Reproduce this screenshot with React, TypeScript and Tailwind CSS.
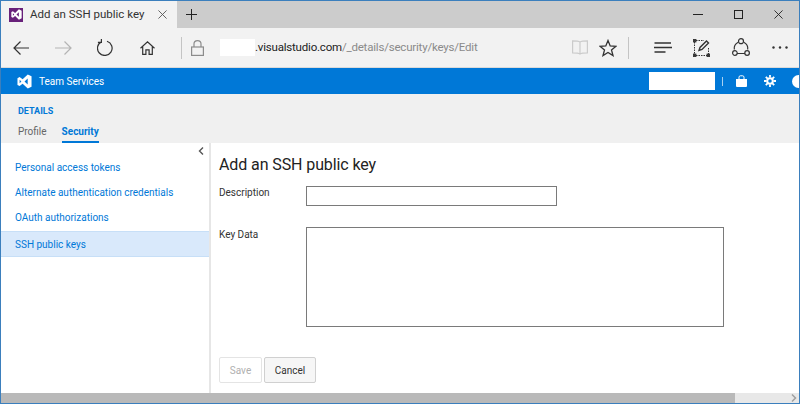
import React from "react";

// ── Logos and browser glyphs, drawn to the size they have in the picture ───────

function VsLogo({ size, color }: { size: number; color: string }) {
    return (
        <svg width={size} height={size} viewBox="0 0 16 16" fill={color}>
            <path d="M11.5 0.5 15.5 2.4v11.2L11.5 15.5 6 10.3l-3.2 2.5L0.5 11.6V4.4L2.8 3.2 6 5.7zM2.8 6.2v3.6L4.7 8zM11.4 4.8 8 8l3.4 3.2z" />
        </svg>
    );
}

const Back = () => (
    <svg width="16" height="14" viewBox="0 0 16 14" fill="none" stroke="#333" strokeWidth="1.2"><path d="M16 7H1M7.5.5 1 7l6.5 6.5" /></svg>
);
const Forward = () => (
    <svg width="17" height="14" viewBox="0 0 17 14" fill="none" stroke="#b4b4b4" strokeWidth="1.2"><path d="M0 7h16M9.5.5 16 7l-6.5 6.5" /></svg>
);
const Reload = () => (
    <svg width="16" height="17" viewBox="0 0 16 17" fill="none" stroke="#333" strokeWidth="1.2"><path d="M10 2.2A7.3 7.3 0 1 1 4.6 2.6M4.4 0v3.4H0.9" /></svg>
);
const HomeIcon = () => (
    <svg width="15" height="14" viewBox="0 0 15 14" fill="none" stroke="#333" strokeWidth="1.2"><path d="M.5 7.2 7.5 .9l7 6.3M2.7 5.6v7.8h3.2V8.8h3.2v4.6h3.2V5.6" /></svg>
);
const LockIcon = () => (
    <svg width="13" height="16" viewBox="0 0 13 16" fill="none" stroke="#8c8c8c" strokeWidth="1.2"><rect x=".6" y="7" width="11.8" height="8.4" /><path d="M3 7V3.8a3.5 3.2 0 0 1 7 0V7" /></svg>
);
const Reader = () => (
    <svg width="16" height="15" viewBox="0 0 16 15" fill="none" stroke="#cbcbcb" strokeWidth="1.2"><path d="M8 2C6.5 1 3 .8.6.8v12c2.4 0 5.9.2 7.4 1.2 1.500-1 5-1.200 7.400-1.200V.8C13 .8 9.500 1 8 2zM8 2v12" /></svg>
);
const StarIcon = () => (
    <svg width="18" height="18" viewBox="0 0 18 18" fill="none" stroke="#333" strokeWidth="1.3"><path d="M9 1.500 11.200 6.900l5.800.4-4.500 3.700 1.500 5.600L9 13.500l-5 3.100 1.500-5.600L1 7.300l5.800-.4z" /></svg>
);
const HubIcon = () => (
    <svg width="18" height="11" viewBox="0 0 18 11" fill="none" stroke="#333" strokeWidth="1.300"><path d="M.5 1h16.500M0 5.500h18M.5 10h11" /></svg>
);
const NoteIcon = () => (
    <svg width="17" height="18" viewBox="0 0 17 18" fill="none" stroke="#333" strokeWidth="1">
        <path d="M1.500 3v12.500M3 16.500h11M15.500 9v6M3 1.500h8" strokeDasharray="1.500 1" />
        <path d="M6 11.500l1-3 6.500-6.500 2 2L9 10.500z" strokeWidth="1.400" />
        <rect x=".3" y=".3" width="2.600" height="2.600" fill="#333" />
        <rect x=".3" y="15.100" width="2.600" height="2.600" fill="#333" />
        <rect x="14.100" y="15.100" width="2.600" height="2.600" fill="#333" />
    </svg>
);
const ShareIcon = () => (
    <svg width="18" height="19" viewBox="0 0 18 19" fill="none" stroke="#333" strokeWidth="1.200">
        <path d="M6.200 4.300A7 7 0 0 0 2.300 11.500M11.800 4.300A7 7 0 0 1 15.700 11.500M5 15.500h8" />
        <circle cx="9" cy="3.200" r="2.500" />
        <circle cx="2.900" cy="15" r="2.300" />
        <circle cx="15.100" cy="15" r="2.300" />
    </svg>
);
const Dots = () => (
    <svg width="16" height="3" viewBox="0 0 16 3" fill="#333"><circle cx="1.500" cy="1.500" r="1.200" /><circle cx="8" cy="1.500" r="1.200" /><circle cx="14.500" cy="1.500" r="1.200" /></svg>
);
const Cross = ({ size, color }: { size: number; color: string }) => (
    <svg width={size} height={size} viewBox="0 0 10 10" fill="none" stroke={color} strokeWidth="1"><path d="M.5.5l9 9M9.500.5l-9 9" /></svg>
);
const Bag = () => (
    <svg width="11" height="12" viewBox="0 0 11 12" fill="#fff"><path d="M0 4h11v7a1 1 0 0 1-1 1H1a1 1 0 0 1-1-1z" /><path d="M3 4.500V2.200C3 1.300 3.600.8 4.300.8h2.400C7.400.8 8 1.300 8 2.200v2.300" fill="none" stroke="#fff" /></svg>
);
const Gear = () => (
    <svg width="12" height="12" viewBox="0 0 12 12" fill="none" stroke="#fff"><circle cx="6" cy="6" r="2.800" strokeWidth="2" /><path d="M6 0v2.500M6 9.500V12M0 6h2.500M9.500 6H12M1.800 1.800l1.800 1.800M8.400 8.400l1.800 1.800M1.800 10.200l1.800-1.800M8.400 3.600l1.800-1.800" strokeWidth="1.800" /></svg>
);

// ── Main export ────────────────────────────────────────────────────────────────

const links = ["Personal access tokens", "Alternate authentication credentials", "OAuth authorizations"];

export default function App() {
    return (
        <div className="w-[800px] h-[404px] overflow-hidden flex flex-col border border-[#3b7fbd] bg-white text-[#333] font-['Roboto','Noto_Sans',sans-serif]">
            {/* ── Tab strip ── */}
            <div className="h-[27px] shrink-0 flex bg-[#cccccc]">
                <div className="w-[176px] bg-[#f2f2f2] flex items-center pl-[8px]">
                    <div className="w-[14px] h-[14px] flex items-center justify-center bg-[#68217a]">
                        <VsLogo size={11} color="#fff" />
                    </div>
                    <span className="w-[128px] ml-[7px] text-[11.5px] whitespace-nowrap">Add an SSH public key</span>
                    <div className="flex"><Cross size={9} color="#555" /></div>
                </div>
                <svg width="11" height="11" viewBox="0 0 11 11" stroke="#222" className="ml-[9px] self-center"><path d="M5.500 0v11M0 5.500h11" /></svg>
                <div className="ml-auto flex items-center pr-[16px] text-[#222]">
                    <div className="w-[10px] h-px bg-[#222]" />
                    <div className="ml-[31px] w-[9px] h-[9px] border border-[#222]" />
                    <div className="ml-[31px] flex"><Cross size={9} color="#222" /></div>
                </div>
            </div>

            {/* ── Address bar ── */}
            <div className="h-[40px] shrink-0 flex items-center bg-[#f2f2f2] border-b border-[#dadada]">
                <div className="ml-[12px] flex"><Back /></div>
                <div className="ml-[26px] flex"><Forward /></div>
                <div className="ml-[25px] flex"><Reload /></div>
                <div className="ml-[27px] flex"><HomeIcon /></div>
                <div className="ml-[26px] w-px h-[22px] bg-[#c4c4c4]" />
                <div className="ml-[9px] flex"><LockIcon /></div>
                <div className="ml-[16px] w-[35px] h-[17px] bg-white" />
                <span className="w-[317px] text-[11.5px] tracking-[-0.2px] whitespace-nowrap text-[#222]">.visualstudio.com<span className="text-[#8a8a8a]">/_details/security/keys/Edit</span></span>
                <div className="flex"><Reader /></div>
                <div className="ml-[11px] flex"><StarIcon /></div>
                <div className="ml-[11px] w-px h-[22px] bg-[#c4c4c4]" />
                <div className="ml-[25px] flex"><HubIcon /></div>
                <div className="ml-[21px] flex"><NoteIcon /></div>
                <div className="ml-[22px] flex"><ShareIcon /></div>
                <div className="ml-[22px] flex"><Dots /></div>
            </div>

            {/* ── Service bar ── */}
            <div className="h-[26px] shrink-0 flex items-center bg-[#0078d7] text-white overflow-hidden">
                <div className="ml-[16px] flex"><VsLogo size={15} color="#fff" /></div>
                <span className="ml-[7px] text-[10px]">Team Services</span>
                <div className="ml-auto w-[66px] h-[18px] bg-white" />
                <div className="ml-[7px] w-px h-[9px] bg-[#a8d0f0]" />
                <div className="ml-[13px] flex"><Bag /></div>
                <div className="ml-[17px] flex"><Gear /></div>
                <div className="ml-[16px] mr-[-6px] w-[13px] h-[13px] rounded-full bg-white shrink-0" />
            </div>

            {/* ── Page header ── */}
            <div className="h-[49px] shrink-0 bg-[#f0f0f0] pl-[17px] flex flex-col">
                <div className="mt-[11px] text-[9px] font-bold leading-[12px] text-[#0078d7]">DETAILS</div>
                <div className="mt-[5px] flex gap-[15px] text-[10px] leading-[20px]">
                    <span className="text-[#666]">Profile</span>
                    <span className="font-bold text-[#0078d7] border-b-2 border-[#0078d7] h-[21px]">Security</span>
                </div>
            </div>

            {/* ── Body ── */}
            <div className="flex-1 min-h-0 flex">
                <div className="w-[210px] shrink-0 border-r-2 border-[#e6e6e6] pt-[12px] relative">
                    <svg width="6" height="8" viewBox="0 0 6 8" fill="none" stroke="#555" strokeWidth="1.400" className="absolute right-[5px] top-[4px]"><path d="M5 .5 1.500 4 5 7.500" /></svg>
                    {links.map((l) => (
                        <div key={l} className="h-[25px] pl-[14px] flex items-center text-[10px] whitespace-nowrap text-[#0078d7]">{l}</div>
                    ))}
                    <div className="mt-[1px] h-[26px] pl-[14px] flex items-center text-[10px] text-[#0078d7] bg-[#d9e9fb] border-y border-[#c7dff7]">SSH public keys</div>
                </div>
                <div className="flex-1 pl-[8px]">
                    <h1 className="mt-[9px] text-[16px] tracking-[-0.1px] leading-[26px] whitespace-nowrap text-[#222]">Add an SSH public key</h1>
                    <div className="mt-[8px] flex items-start">
                        <label className="w-[87px] text-[10px] leading-[16px] -mt-[1px]">Description</label>
                        <input className="w-[251px] h-[20px] border border-[#7a7a7a] bg-white" />
                    </div>
                    <div className="mt-[21px] flex items-start">
                        <label className="w-[87px] text-[10px] leading-[16px]">Key Data</label>
                        <textarea className="w-[418px] h-[100px] border border-[#7a7a7a] bg-white resize-none" />
                    </div>
                    <div className="mt-[30px] flex gap-[2px]">
                        <button className="w-[43px] h-[26px] border border-[#e4e4e4] rounded-[2px] bg-white text-[10px] text-[#b0b0b0]">Save</button>
                        <button className="w-[52px] h-[26px] border border-[#d0d0d0] rounded-[2px] bg-[#f6f6f6] text-[10px] text-[#333]">Cancel</button>
                    </div>
                </div>
            </div>

            {/* ── Horizontal scrollbar ── */}
            <div className="h-[10px] shrink-0 flex items-center bg-[#e8e8e8]">
                <div className="w-[734px] h-full bg-[#b9b9b9]" />
                <svg width="6" height="8" viewBox="0 0 6 8" fill="none" stroke="#a0a0a0" strokeWidth="1.500" className="ml-auto mr-[2px]"><path d="M1 .5 4.500 4 1 7.500" /></svg>
            </div>
        </div>
    );
}
